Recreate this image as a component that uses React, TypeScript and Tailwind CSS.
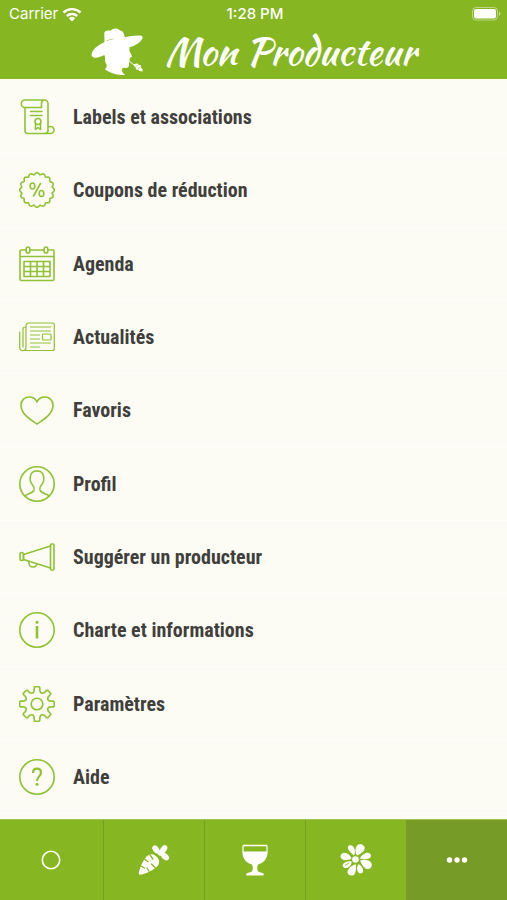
import type { ReactNode } from "react";

type IconProps = {
  children: ReactNode;
};

type MenuItem = {
  label: string;
  icon: ReactNode;
};

function LineIcon({ children }: IconProps) {
  return (
    <svg
      viewBox="0 0 36 36"
      className="h-9 w-9 shrink-0"
      fill="none"
      stroke="#90c136"
      strokeWidth="1.6"
      strokeLinecap="round"
      strokeLinejoin="round"
      aria-hidden="true"
    >
      {children}
    </svg>
  );
}

// Closed outline around the icon centre, from [radius, degrees] pairs.
function polarPath(points: [number, number][]) {
  const coords = points.map(([r, deg]) => {
    const a = (deg * Math.PI) / 180;
    return `${(18 + r * Math.cos(a)).toFixed(2)} ${(18 + r * Math.sin(a)).toFixed(2)}`;
  });
  return `M${coords.join("L")}Z`;
}

const badgePath = polarPath(
  Array.from({ length: 144 }, (_, i): [number, number] => {
    const deg = i * 2.5;
    return [15.4 + 2 * Math.abs(Math.cos((deg * 8 * Math.PI) / 180)) ** 1.4, deg];
  }),
);

const gearPath = polarPath(
  Array.from({ length: 8 }, (_, i) => i * 45).flatMap((d): [number, number][] => [
    [11.6, d - 22],
    [12.2, d - 17],
    [13.6, d - 12],
    [16.6, d - 10],
    [17.4, d - 7],
    [17.4, d + 7],
    [16.6, d + 10],
    [13.6, d + 12],
    [12.2, d + 17],
    [11.6, d + 22],
  ]),
);

const menuItems: MenuItem[] = [
  {
    label: "Labels et associations",
    icon: (
      <LineIcon>
        <path d="M6 8.500a3.700 3.700 0 0 1 0-7.500h19.500A3.500 3.500 0 0 1 29 4.500V31a3.300 3.300 0 0 1-3 3.500M25.500 1a3 3 0 0 0-3 3v4.500H6v23A3 3 0 0 0 9 34.500h22.500a3.500 3.500 0 1 0-2.500-6" />
        <path d="M11.500 12.500h11.500M11.500 16.500h11.500" />
        <circle cx="19" cy="22.500" r="3" />
        <path d="M16.500 25v5.500l2.500-2 2.500 2V25" />
      </LineIcon>
    ),
  },
  {
    label: "Coupons de réduction",
    icon: (
      <LineIcon>
        <path d={badgePath} />
        <ellipse cx="13.500" cy="14" rx="2.300" ry="3" />
        <ellipse cx="22.500" cy="21.500" rx="2.300" ry="3" />
        <path d="M21.500 11.500 14.500 24" />
      </LineIcon>
    ),
  },
  {
    label: "Agenda",
    icon: (
      <LineIcon>
        <path d="M7 4H2a1 1 0 0 0-1 1v28a1.500 1.500 0 0 0 1.500 1.500h31A1.500 1.500 0 0 0 35 33V5a1 1 0 0 0-1-1h-5M11 4h14M1 10.500h34" />
        <rect x="7.200" y="1" width="3.600" height="6" rx="1.800" />
        <rect x="25.200" y="1" width="3.600" height="6" rx="1.800" />
        <path d="M5 15.500h26v15H5zM5 20.500h26M5 25.500h26M11.500 15.500v15M18 15.500v15M24.500 15.500v15" />
      </LineIcon>
    ),
  },
  {
    label: "Actualités",
    icon: (
      <LineIcon>
        <g strokeWidth="1.200">
          <path d="M7 6.500a3 3 0 0 1 2-2.500h24.500A1.800 1.800 0 0 1 35.300 6v23.500a2 2 0 0 1-2 2H4.500M7 6.500V29c0 3.500-6.300 3.500-6.300 0V13M7 8c-2 0-3 .5-3 2v18" />
          <path d="M11.500 8h20M11.500 12h20M11.500 16h9M11.500 20h9M11.500 24h20M11.500 28h9" />
          <rect x="23.500" y="15" width="8.500" height="6" rx="1" />
        </g>
      </LineIcon>
    ),
  },
  {
    label: "Favoris",
    icon: (
      <LineIcon>
        <path d="M18 32C13 28.500 2 22.500 2 13.500 2 8 6 5 10 5c3.500 0 6.500 1.500 8 5 1.500-3.500 4.500-5 8-5 4 0 8 3 8 8.500C34 22.500 23 28.500 18 32z" />
      </LineIcon>
    ),
  },
  {
    label: "Profil",
    icon: (
      <LineIcon>
        <circle cx="18" cy="18" r="17.200" />
        <path d="M6 30c2-2.500 8-2.500 9-6 .5-2 0-3.500-1.500-5-2.500-3-2.500-7-2-9C12 6.500 14.500 5 18 5s6 1.500 6.500 5c.5 2 .5 6-2 9-1.500 1.500-2 3-1.500 5 1 3.500 7 3.500 9 6" />
      </LineIcon>
    ),
  },
  {
    label: "Suggérer un producteur",
    icon: (
      <LineIcon>
        <rect x="31.500" y="5" width="3.500" height="26" rx="1" />
        <path d="M31.500 7 4.500 15.500v5L31.500 29" />
        <rect x="1" y="13.500" width="3.500" height="8" rx="1.700" />
        <path d="M10 22.500v2a3.500 3.500 0 0 0 3.500 3.500h1a3.500 3.500 0 0 0 3.300-3" />
      </LineIcon>
    ),
  },
  {
    label: "Charte et informations",
    icon: (
      <LineIcon>
        <circle cx="18" cy="18" r="17.200" />
        <path d="M18 14v12.500" strokeWidth="2.600" strokeLinecap="butt" />
        <circle cx="18" cy="10.300" r="1.500" fill="#90c136" stroke="none" />
      </LineIcon>
    ),
  },
  {
    label: "Paramètres",
    icon: (
      <LineIcon>
        <path d={gearPath} />
        <circle cx="18" cy="18" r="5.800" />
      </LineIcon>
    ),
  },
  {
    label: "Aide",
    icon: (
      <LineIcon>
        <circle cx="18" cy="18" r="17.200" />
        <path
          d="M14 14c0-2.700 1.500-4.300 4-4.300s4 1.500 4 4c0 3.500-4 4-4 8.300"
          strokeWidth="2.200"
          strokeLinecap="butt"
        />
        <circle cx="18" cy="25.300" r="1.500" fill="#90c136" stroke="none" />
      </LineIcon>
    ),
  },
];

function WifiIcon() {
  return (
    <svg viewBox="0 0 20 15" className="h-[15px] w-5" fill="none" stroke="#fff" aria-hidden="true">
      <path d="M1.500 5.500a12.500 12.500 0 0 1 17 0" strokeWidth="2.400" />
      <path d="M4.800 9a7.800 7.800 0 0 1 10.400 0" strokeWidth="2.400" />
      <path d="M10 14.500 6.800 11.200a4.800 4.800 0 0 1 6.400 0z" fill="#fff" stroke="none" />
    </svg>
  );
}

function BatteryIcon() {
  return (
    <svg viewBox="0 0 29 14" className="h-3.5 w-[29px]" aria-hidden="true">
      <rect x="0.500" y="0.500" width="25" height="12.500" rx="3.500" fill="none" stroke="#fff" strokeOpacity="0.45" />
      <rect x="2" y="2" width="22" height="9.500" rx="2" fill="#fff" />
      <path d="M27 4.500c2 1 2 3.500 0 4.500z" fill="#fff" fillOpacity="0.500" />
    </svg>
  );
}

function FarmerLogo() {
  return (
    <svg viewBox="0 0 52 47" className="h-[47px] w-[52px] shrink-0" fill="#fff" aria-hidden="true">
      <path d="M13.500 14 13.300 5C13.500 2.500 17 2 19.500 2.800 21 1.200 24 .2 26 .8c2.500.5 2.500 2 4.500 2.200C33 4 33 7 34 9.300 40 8 47 6.800 51 8c2 2-1 5.500-5 8-3 2-5.500 2.800-7.500 3.300V23l2.500 5c.3 1.300-1.500 1.300-2 1.800l-.5 2.700c.3 1.500-.7 2.500-.5 3.500.3 3-1.500 4.300-4 3.800-2-.3-3.500.7-3 2.700.3 2 1.800 3.500 3.500 4.500C27 47.500 19 45 14 41.500c1.500-2 2.500-4 1-6-2-3 0-6-1.800-8.500C9.500 29 4 30.800 1.300 28.800-1 26 2 21.500 6 18.500c2.500-2 5-3.500 7.500-4.500z" />
      <path d="M14 13.500c3-1.300 6-1.500 9.500-2.700-3.500.2-6.500 1-9.500 2.700z" fill="#86b622" />
      <path d="m38.500 33.500 12 9" fill="none" stroke="#fff" strokeWidth="1" />
      <path d="m43 36 3.500-.5 1.500 1.500 2 .5v2l1.500 1.500v2.500l-3-.5-1.500-1.200-2-.3-.3-2-1.700-1.200z" />
      <path d="m44.500 38.500 2-1M47 40.500l2.500-1.500" fill="none" stroke="#86b622" strokeWidth="0.500" />
    </svg>
  );
}

function CircleTabIcon() {
  return (
    <svg viewBox="0 0 32 32" className="h-8 w-8" fill="none" stroke="#fff" strokeWidth="1.600" aria-hidden="true">
      <circle cx="16" cy="16" r="8.700" />
    </svg>
  );
}

function CarrotIcon() {
  return (
    <svg viewBox="0 0 32 32" className="h-8 w-8" fill="#fff" aria-hidden="true">
      <path d="M.8 30.500C.5 28 3 20 7 14.500 9.500 10.500 14 8.500 18 12c4.500 3.500 4 8.500 0 11.500C13 27.500 4 31.500.8 30.500z" />
      <ellipse cx="18" cy="5.500" rx="3" ry="4.500" transform="rotate(-38 18 5.500)" />
      <ellipse cx="25.500" cy="5.500" rx="3" ry="4.800" transform="rotate(35 25.500 5.500)" />
      <ellipse cx="27" cy="12.500" rx="3" ry="4.500" transform="rotate(-48 27 12.500)" />
      <circle cx="22.500" cy="9" r="2.800" />
      <path d="m6.500 15 3.500 2.700M3 22l3.500 2M11 27l-2-3M17 23.500 13.500 20M12 11l3 4" fill="none" stroke="#86b622" strokeWidth="1.300" strokeLinecap="round" />
      <path d="M17 10.500c1 .3 3.500 2.200 4.500 4.500" fill="none" stroke="#86b622" strokeWidth="1.100" strokeLinecap="round" />
    </svg>
  );
}

function GlassIcon() {
  return (
    <svg viewBox="0 0 32 32" className="h-8 w-8" fill="#fff" aria-hidden="true">
      <path d="M4.500 1.500h23" stroke="#fff" strokeWidth="1.500" strokeLinecap="round" />
      <path d="M4 2v6M28 2v6" stroke="#fff" strokeWidth="1.200" />
      <path d="M3.400 7.500h25.200c.2 7-4 11.500-9.600 13-1.200 2.500-1 6 .5 7.300l4.500 1.500c1.500.8 1 2.200-.5 2.200h-15c-1.500 0-2-1.400-.5-2.200l4.500-1.500c1.500-1.300 1.700-4.800.5-7.300-5.600-1.500-9.800-6-9.600-13z" />
    </svg>
  );
}

function FlowerIcon() {
  return (
    <svg viewBox="0 0 32 32" className="h-8 w-8" fill="#fff" aria-hidden="true">
      <circle cx="15.500" cy="15.500" r="3.300" />
      <path d="M14 11.500C10 8.500 7 4.500 8 2.500c1.500-2.500 5.500-1 6.500 2.500.7 2.500.5 4.500-.5 6.500z" />
      <path d="M17 11.500c-2.500-4-2-9 1.500-10.900 3-1.300 6.500.9 6.200 3.900-.3 3-4.500 5.500-7.700 7z" />
      <path d="M20 14.500c1.500-3.500 6-6.500 9-5.500 3 1.300 2.500 5-.5 5.700-2.500.6-6 .8-8.500-.2z" />
      <path d="M20 16.500c4-1.500 9.500-.8 11.300 2.500 1.500 3-.5 6.500-4.300 6-3-.5-5.500-5-7-8.500z" />
      <path d="M18.500 20c3 1.500 5.500 5.500 4.500 8-1.200 2.300-4.500 1.500-5.500-1-.8-2-.5-5 1-7z" />
      <path d="M15.500 20c1 4 .5 9-1.700 11-2.300 1.300-6 .3-6.300-2.500-.3-3.500 4.500-7 8-8.500z" />
      <path d="M11.500 17.500c.5 2.500-2 6.500-5.500 6.500-2.700 0-4.200-2.200-2.900-4 1.500-2 5.200-3.300 8.400-2.500z" />
      <path d="M11.500 14.500C8 16.500 3 17 1 14c-1.300-2.500.5-5.300 3.500-5.300 3 .2 6 2.800 7 5.800z" />
      <path d="m5 21.500 4-2.500" stroke="#86b622" strokeWidth="0.800" />
    </svg>
  );
}

function MoreIcon() {
  return (
    <svg viewBox="0 0 32 32" className="h-8 w-8" fill="#fff" aria-hidden="true">
      <circle cx="8.500" cy="16" r="2.700" />
      <circle cx="16" cy="16" r="2.700" />
      <circle cx="23.500" cy="16" r="2.700" />
    </svg>
  );
}

const tabs = [
  { name: "Accueil", icon: <CircleTabIcon /> },
  { name: "Produits", icon: <CarrotIcon /> },
  { name: "Boissons", icon: <GlassIcon /> },
  { name: "Fleurs", icon: <FlowerIcon /> },
  { name: "Plus", icon: <MoreIcon />, active: true },
];

function App() {
  return (
    <div className="flex min-h-screen flex-col bg-[#fdfcf4] font-['Roboto_Condensed','Liberation_Sans_Narrow',Roboto,sans-serif]">
      <header className="bg-[#86b622] pb-1 text-white">
        <div className="grid h-7 grid-cols-3 items-center pr-1.5 pl-[9px] font-[Inter,sans-serif] text-[15px]">
          <div className="flex items-center gap-1">
            <span>Carrier</span>
            <WifiIcon />
          </div>
          <span className="text-center font-medium">1:28 PM</span>
          <div className="flex justify-end">
            <BatteryIcon />
          </div>
        </div>
        <div className="flex items-center justify-center gap-[22px]">
          <FarmerLogo />
          <h1 className="font-['Kaushan_Script',Lato,sans-serif] text-[38px] leading-[47px] whitespace-nowrap">
            Mon Producteur
          </h1>
        </div>
      </header>

      <nav className="flex grow flex-col pt-0.5 pb-[5px]" aria-label="Menu">
        <ul className="flex grow flex-col">
          {menuItems.map((item) => (
            <li key={item.label} className="flex grow border-b border-white/60">
              <a
                href="#"
                className="flex grow items-center gap-[18px] px-[19px] text-xl font-bold text-[#413f3c]"
              >
                {item.icon}
                <span>{item.label}</span>
              </a>
            </li>
          ))}
        </ul>
      </nav>

      <footer className="grid h-[81px] grid-cols-5 border-t border-[#9dc44d] bg-[#86b622] pl-0.5">
        {tabs.map((tab) => (
          <button
            key={tab.name}
            type="button"
            aria-label={tab.name}
            className={
              tab.active
                ? "flex items-center justify-center bg-[#769b27]"
                : "flex items-center justify-center border-l border-[#769f26] first:border-l-0 first:pr-1"
            }
          >
            {tab.icon}
          </button>
        ))}
      </footer>
    </div>
  );
}

export default App;
